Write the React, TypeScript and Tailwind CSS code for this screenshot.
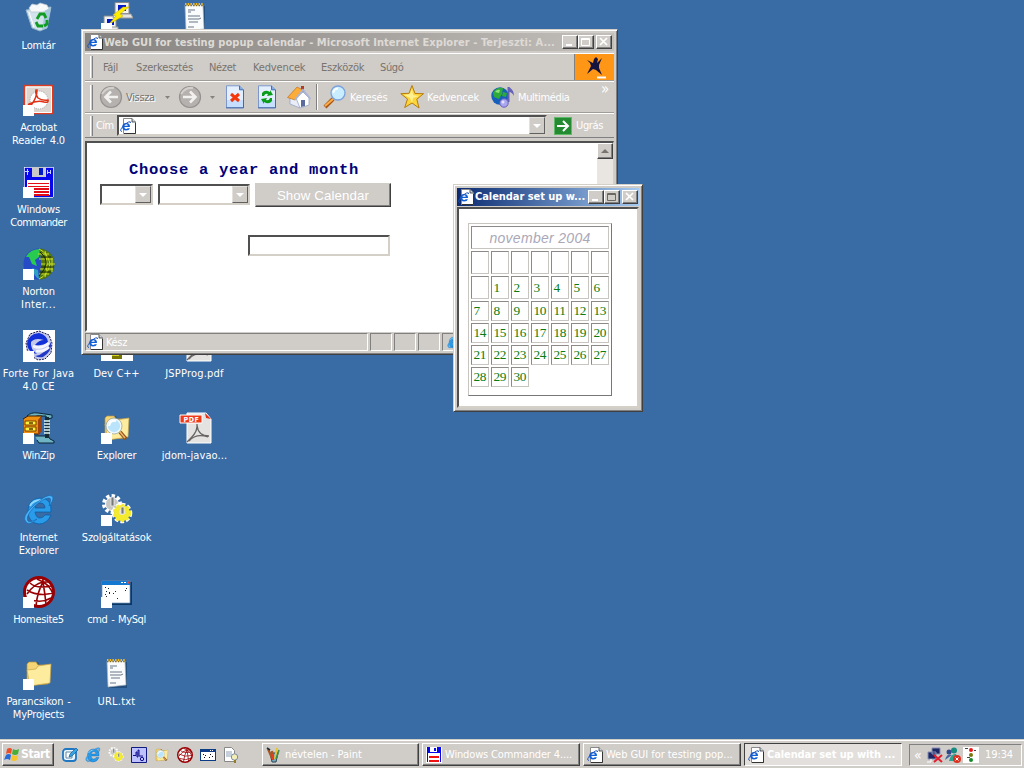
import React from "react";

type P = { className?: string };

const ui = "font-['DejaVu_Sans_Condensed','DejaVu_Sans',sans-serif] [font-stretch:condensed]";

/* ---------- icons ---------- */

const Shortcut = () => <rect x="0" y="21" width="11" height="11" fill="#fff" />;

const Recycle = ({ className = "size-8" }: P) => (
  <svg viewBox="0 0 32 32" className={className}>
    <path d="M3 8 L28 5 L24 26 L17 29 L9 26Z" fill="#d2e3ec" stroke="#8fb2c9" />
    <path d="M6 6 L9 2 L14 3 L17 1 L24 3 L26 7 L20 10 L8 10Z" fill="#f6f8fa" stroke="#b9c6cf" strokeWidth=".7" />
    <path d="M24 26 L28 5 L22 9 L19 28Z" fill="#a5c8dd" />
    <path d="M6 10 L11 25 M10 4 L15 8 L20 3" stroke="#fff" fill="none" />
    <path d="M14 17 L17 12 H21 L23 16 M20 24 H15 L13 20 M24 18 L24 22 L21 24" stroke="#119b23" strokeWidth="2.8" fill="none" />
  </svg>
);

const Network = ({ className = "size-8" }: P) => (
  <svg viewBox="0 0 32 32" className={className}>
    <path d="M14 .5h14v11H14zM3 14h12v12H3z" fill="#f2f2f2" stroke="#8a8a8a" />
    <path d="M17 3h8v6h-8zM6 17h7v6H6z" fill="#0018c8" />
    <path d="M13 12h17l2 4H12zM1 25h16v5H0z" fill="#e4e4e4" stroke="#999" />
    <path d="M22 5 L12 13 L15 14 L7 23 L22 14 L19 12 L28 5Z" fill="#ffee00" stroke="#c7a500" strokeWidth=".5" />
    <Shortcut />
  </svg>
);

const Notepad = ({ className = "size-8" }: P) => (
  <svg viewBox="0 0 32 32" className={className}>
    <path d="M7 4h19v26H8z" fill="#143c67" opacity=".6" />
    <path d="M6 3h18l1 24-18 2z" fill="#fafbfc" stroke="#a9b3bb" strokeWidth=".7" />
    <path d="M6 3h18" stroke="#85680b" strokeWidth="2.4" strokeDasharray="1.5 1.2" />
    <path d="M6 2h18" stroke="#eeb72e" strokeWidth="2" strokeDasharray="1.5 1.2" />
    <path d="M9 8h7M9 10h3M9 14h12M9 17h11l2-1M10 20h9M9 25h6" stroke="#687785" fill="none" />
  </svg>
);

const Acrobat = ({ className = "size-8" }: P) => (
  <svg viewBox="0 0 32 32" className={className}>
    <path d="M1.5 1.5h28v28h-28z" fill="#dcd5d0" stroke="#df3b21" strokeWidth="1.3" />
    <path d="M3 3h25.500v25.500H3z" fill="none" stroke="#fff" />
    <circle cx="16" cy="16" r="9" fill="#fff" stroke="#aaa" strokeDasharray="1 1" />
    <path d="M13 6 Q12 10 15 14 Q19 17 25 16 Q26 19 21 18 Q14 16 6 20 Q4 23 9 20 Q14 13 14 6Z" fill="none" stroke="#e13216" strokeWidth="1.5" />
    <Shortcut />
  </svg>
);

const Floppy = ({ className = "size-8", shortcut = true }: P & { shortcut?: boolean }) => (
  <svg viewBox="0 0 32 32" className={className} shapeRendering="crispEdges">
    <path d="M1 1h29v30H4l-3-3z" fill="#0707ed" stroke="#fff" strokeWidth=".7" />
    <path d="M9 1h14v10H9z" fill="#c9c9c9" />
    <path d="M16 2h4v7h-4z" fill="#001bc5" />
    <path d="M4 14h23v15H4z" fill="#fff" />
    <path d="M5 17h21M5 20h21" stroke="#e20b16" />
    <path d="M5 23h21M11 26h15M11 29h15" stroke="#e20b16" strokeWidth="2" />
    <path d="M2 5h4M4 3v6M24 4v4M24 6h3v-2M27 4v4" stroke="#c9d2ff" fill="none" />
    {shortcut && <Shortcut />}
  </svg>
);

const SmallFloppy = () => (
  <svg viewBox="0 0 16 16" className="size-4 shrink-0" shapeRendering="crispEdges">
    <path d="M0 0h16v16H0z" fill="#fff" />
    <path d="M1 0h14v6H1zM1 6h1v9H1zM14 6h1v9h-1z" fill="#0707ed" />
    <path d="M4 0h7v5H4z" fill="#fff" />
    <path d="M8 1h2v3H8z" fill="#0707ed" />
    <path d="M3 9h10v2H3zM3 13h10v2H3z" fill="#f01010" />
  </svg>
);

const Norton = () => (
  <svg viewBox="0 0 32 32" className="size-8">
    <circle cx="16" cy="16" r="15.5" fill="#254bc6" />
    <path d="M3 9 Q7 1 17 1 L16 9 L12 12 L14 18 L9 16 L6 9Z" fill="#29ca50" />
    <path d="M9 20l6 2 1 9q-5-2-7-11z" fill="#2f9fc0" />
    <path d="M16 .5 A15.5 15.5 0 0 1 16 31.5 Q20 16 16 .5Z" fill="#55790c" />
    <path d="M16 1 Q25 5 27 16 Q25 27 16 31 M15 6h11M16 11h14M18 16h14M17 21h13M16 26h10M22 3 Q26 16 22 29M29 8v16" fill="none" stroke="#c8dd2a" />
    <path d="M17 4 Q24 10 23 16 T16 28M18 9h12M18 19h13M17 24h11" fill="none" stroke="#182806" />
    <Shortcut />
  </svg>
);

const Forte = () => (
  <svg viewBox="0 0 32 32" className="size-8">
    <path d="M0 0h32v32H0z" fill="#fff" />
    <path d="M16 1 L26 5 29 13 28 23 22 29 15 30 5 24 3 13 7 4Z" fill="#c4c9ea" stroke="#15174a" strokeDasharray="2 1" />
    <path d="M4 14 Q5 4 16 3 Q24 5 25 12 Q20 16 12 15 Q16 10 21 10 Q12 7 8 12 Q7 19 14 24 Q5 23 4 14Z" fill="#1230d8" />
    <path d="M28 12 Q29 22 20 27 Q16 28 12 26 Q22 25 28 12" fill="#2338c4" />
    <path d="M10 16 Q18 20 26 13 M13 21 Q21 22 26 17" fill="none" stroke="#f4f5ff" strokeWidth="2.6" />
    <Shortcut />
  </svg>
);

const WinZip = () => (
  <svg viewBox="0 0 32 32" className="size-8">
    <path d="M4 4 Q8 0 15 1 L29 3V6L24 7 23 4 14 4 10 6ZM12 24h13l2 3 4 2v2H16l-2-3" fill="#6fb4c4" stroke="#092634" />
    <path d="M24 5v21" stroke="#172c32" strokeWidth="4" />
    <path d="M21 9h6m-6 3h6m-6 3h6m-6 3h6m-6 3h6" stroke="#e4f7f7" strokeWidth="1.3" />
    <path d="M0 7 L5 4h14l-3 4v14H0z" fill="#ef9011" stroke="#401d00" />
    <path d="M15 8l4-4v15l-4 4z" fill="#a1440b" />
    <path d="M2 9h11v4H2zM2 15h11v4H2z" fill="#fff13c" stroke="#784100" />
    <path d="M6 11h4m-4 6h4" stroke="#5b3b00" strokeWidth="1.5" />
    <Shortcut />
  </svg>
);

const Folder = ({ className = "size-8", shortcut = false, lens = false }: P & { shortcut?: boolean; lens?: boolean }) => (
  <svg viewBox="0 0 32 32" className={className}>
    <path d="M5 8 L8 4h7l2 3h10v18L6 28z" fill="#26496c" opacity=".55" />
    <path d="M4 6 L6 4h7l2 3h11l-1 19L4 27z" fill="#f4d475" stroke="#b7943d" strokeWidth=".7" />
    <path d="M4 12 L13 11 15 8 L28 6l-1 19L7 28z" fill="#fdeb9e" stroke="#c8a446" strokeWidth=".7" />
    {lens && (
      <>
        <path d="M19 20l6 7" stroke="#8b5418" strokeWidth="3.6" />
        <path d="M19 20l5 6" stroke="#f0b067" strokeWidth="1.6" />
        <circle cx="13" cy="14" r="7" fill="#b9e4fb" stroke="#f4f7f8" strokeWidth="1.7" />
        <circle cx="13" cy="14" r="8" fill="none" stroke="#7795a7" strokeWidth=".6" />
        <path d="M8 14 Q9 8 15 9" fill="none" stroke="#fff" strokeWidth="2" />
      </>
    )}
    {shortcut && <Shortcut />}
  </svg>
);

const Pdf = () => (
  <svg viewBox="0 0 34 32" className="h-8 w-[34px]">
    <path d="M9 1h19l5 6v24H9z" fill="#e4e3e2" stroke="#fff" />
    <path d="M27 1l6 6-5-1z" fill="#e23017" />
    <path d="M19 12 Q20 19 13 26 L9 30 M19 13 Q20 24 31 24 M11 29 Q18 21 30 25" fill="none" stroke="#686464" strokeWidth="1.3" />
    <path d="M2 3h22v8H2z" fill="#f0391a" stroke="#fff" />
    <text x="5.500" y="9.600" fontSize="7" fontWeight="bold" fontFamily="DejaVu Sans" fill="#fff" textLength="15">PDF</text>
  </svg>
);

const DevCpp = () => (
  <svg viewBox="0 0 32 32" className="size-8">
    <path d="M0 0h32v31H0z" fill="#fff" />
    <path d="M11 23h10v6H11z" fill="#777600" />
    <path d="M11 24h7v2h-7z" fill="#d5d51a" />
  </svg>
);

const IEBig = ({ className = "size-8" }: P) => (
  <svg viewBox="0 0 32 32" className={className}>
    <path d="M28 18H12Q13 24 17 24Q20 24 22 21H28Q24 30 16 30Q5 29 5 17Q5 5 17 4Q29 4 28 18ZM12 14H22Q22 9 17 9Q13 9 12 14Z" fill="#299be9" stroke="#095aa6" strokeWidth=".7" />
    <path d="M7 12 Q10 6 18 6" fill="none" stroke="#8cd8ff" strokeWidth="1.8" />
    <path d="M3 28 Q-2 23 10 12 Q24-1 29 2 Q32 5 26 12 Q29 4 26 4 Q20 4 11 13 Q2 23 5 27 Q7 29 14 25 Q6 32 3 28Z" fill="#4bb4f6" stroke="#176ab8" strokeWidth=".7" />
  </svg>
);

const IEPage = ({ className = "size-4" }: P) => (
  <svg viewBox="0 0 16 16" className={className}>
    <path d="M3.500.500h8.500l3.500 3.500v11.500h-12z" fill="#fff" stroke="#8a8a8a" />
    <path d="M12 .500v3.500h3.500" fill="#c9d2dc" stroke="#333" strokeWidth=".8" />
    <path d="M4 15.500h11.500V5" fill="none" stroke="#333" />
    <path d="M10 9H4.300Q4.600 11 6.100 11q1 0 1.600-.8H10Q9.200 12.600 6.100 12.600 2.300 12.400 2.200 8.700 2.300 5 6.100 4.900 10.200 5 10 9ZM4.300 7.700h3.500Q7.600 6.300 6.100 6.300T4.300 7.700Z" fill="#1260d8" />
    <path d="M2 13.300Q-.5 13.500 1.500 10.300 4 6 8.500 4 11 3.200 10.500 5" stroke="#1b55b8" strokeWidth="1" fill="none" />
  </svg>
);

const Gears = ({ className = "size-8", shortcut = true }: P & { shortcut?: boolean }) => (
  <svg viewBox="0 0 32 32" className={className}>
    <circle cx="11" cy="10" r="8" fill="none" stroke="#fff" strokeWidth="4" strokeDasharray="3.2 2.1" />
    <circle cx="11" cy="10" r="6.500" fill="#c6c6c3" stroke="#fff" />
    <circle cx="21" cy="19" r="8" fill="none" stroke="#fff" strokeWidth="4.600" strokeDasharray="3.400 1.900" />
    <circle cx="21" cy="19" r="8" fill="#f4ea2e" stroke="#f4ea2e" strokeWidth="2.400" strokeDasharray="2.600 2.700" />
    <circle cx="21" cy="18" r="3" fill="#e6e2d6" />
    <path d="M10 3h3v9h-3zM20 13h3v7h-3z" fill="#787a7a" stroke="#eee" strokeWidth=".8" />
    {shortcut && <Shortcut />}
  </svg>
);

const Homesite = ({ className = "size-8", shortcut = true }: P & { shortcut?: boolean }) => (
  <svg viewBox="0 0 32 32" className={className}>
    <circle cx="16" cy="16" r="14.500" fill="#fff" stroke="#980004" strokeWidth="3" />
    <path d="M20 6Q11 8 4 18M20 6Q14 17 13 30M20 6Q22 18 23 28M20 6Q27 10 30 18M7 7Q13 13 28 10M4 14Q15 21 30 17M6 23Q18 28 28 22M20 2v4M14 3l6 3 8 0" fill="none" stroke="#980004" strokeWidth="1.600" />
    {shortcut && <Shortcut />}
  </svg>
);

const Cmd = () => (
  <svg viewBox="0 0 32 32" className="size-8">
    <path d="M3 6h28v23H3z" fill="#0c3765" />
    <path d="M1 5h28v22H1z" fill="#fff" stroke="#6f93ba" strokeWidth=".7" />
    <path d="M1 5h28v4H1z" fill="#1477d0" />
    <path d="M20 6.500h2m1 0h2" stroke="#fff" />
    <path d="M26 6.500h2" stroke="#e43" strokeWidth="2" />
    <path d="M4 11.500h1m2 1h1m-3 3h1m2 1h1m5-1h1m10-3h1m-2 2h1M4 18.500h1m3-1h1m3 0h1m-8 3h1m10 2h1" stroke="#17272f" fill="none" />
    <Shortcut />
  </svg>
);

const SmallCmd = () => (
  <svg viewBox="0 0 16 16" className="size-4" shapeRendering="crispEdges">
    <path d="M0 2h16v12H0z" fill="#0c3c86" />
    <path d="M1 5h14v8H1z" fill="#fff" />
    <path d="M10 3h1v1h-1zM12 3h1v1h-1z" fill="#fff" />
    <path d="M3 7h1v1H3zM5 8h1v1H5zM4 10h1v1H4zM10 7h1v1h-1zM12 9h1v1h-1zM9 10h1v1H9z" fill="#111" />
  </svg>
);

const StopPage = ({ refresh = false }: { refresh?: boolean }) => (
  <svg viewBox="0 0 20 24" className="h-6 w-5 shrink-0">
    <path d="M1.500.800h13l4 4v18h-17z" fill="#e3efff" stroke="#7d97cc" />
    <path d="M2 15h16v7H2z" fill="#afd0ff" opacity=".55" />
    <path d="M14.500.800v4h4" fill="#88acdf" stroke="#416eb6" />
    <path d="M1 22.800h17.500V5" fill="none" stroke="#4468ad" />
    {refresh ? (
      <>
        <path d="M5 11V8q3-4 8-1V5l3 5-6 1 1-2q-3-1-4 2Z" fill="#0a9b19" />
        <path d="M15 13v3q-3 4-8 1v2l-3-5 6-1-1 2q3 1 4-2Z" fill="#0a9b19" />
      </>
    ) : (
      <path d="M6 9l8 7M14 9l-8 7" stroke="#f4370b" strokeWidth="3" />
    )}
  </svg>
);

const HomeIcon = () => (
  <svg viewBox="0 0 24 24" className="size-6 shrink-0">
    <path d="M3 12v7l10 4V11L8 8z" fill="#e9edf8" stroke="#8f9cc0" strokeWidth=".7" />
    <path d="M9 13l7-6 6 6v7l-9 3z" fill="#fff" stroke="#8f9cc0" strokeWidth=".7" />
    <path d="M14 1h3v6h-3z" fill="#b03a24" />
    <path d="M.5 12.500L10 2l6 3-8 10z" fill="#fbac39" stroke="#c1701f" strokeWidth=".7" />
    <path d="M8 15l8-10 7.500 9" fill="none" stroke="#a9b6da" strokeWidth="1.800" />
    <path d="M14 15h4v6l-4 1z" fill="#5a6ba0" />
  </svg>
);

const SearchIcon = () => (
  <svg viewBox="0 0 24 24" className="size-6 shrink-0">
    <path d="M10 14L2 22" stroke="#a95512" strokeWidth="4" />
    <path d="M10 14L2 21" stroke="#f9ae48" strokeWidth="2" />
    <circle cx="15" cy="8" r="7" fill="#c7edff" stroke="#7ba2dc" strokeWidth="1.300" />
    <path d="M10.500 8Q10 4 15 3.500" stroke="#fff" fill="none" strokeWidth="2" />
  </svg>
);

const Star = () => (
  <svg viewBox="0 0 24 24" className="size-6 shrink-0">
    <path d="M12 .500l3 8 8.500.200-6.700 5.500L19 23l-7-5-7.300 4.500L7.500 14 .800 8.700 9 8.300z" fill="#fcd53c" stroke="#b57b0c" />
    <path d="M12 4l1 6 6 1-6 2-1 5-2-5-6-3 6-1z" fill="#fff7a6" opacity=".8" />
  </svg>
);

const Media = () => (
  <svg viewBox="0 0 24 24" className="size-6 shrink-0">
    <circle cx="9" cy="11" r="8.700" fill="#165fba" />
    <path d="M2 8Q5 2 12 3l-1 6-3 5-5-2zM12 7l4 1-1 4-4-1z" fill="#2eaa38" />
    <path d="M4 7q2-3 5-2l-1 3z" fill="#8fe27c" />
    <path d="M17.500 2v15" stroke="#6461b9" strokeWidth="2" />
    <path d="M18 2q5 3 5 9-2-4-5-4z" fill="#6461b9" />
    <circle cx="13" cy="18" r="4.200" fill="#aaa7f1" stroke="#6561b8" />
    <circle cx="12" cy="17" r="1.500" fill="#e5e4ff" />
  </svg>
);

const ArrowBall = ({ right = false }: { right?: boolean }) => (
  <svg viewBox="0 0 24 24" className="size-6 shrink-0">
    <circle cx="12" cy="12" r="10.500" fill="#b4b1ae" stroke="#94918e" strokeWidth="1.200" />
    <path d="M3 9Q7 2 15 3" stroke="#d2cfcc" fill="none" strokeWidth="2" />
    <path d={right ? "M5 12h12M12 6.500l5.500 5.500-5.500 5.500" : "M19 12H7M12 6.500l-5.500 5.500 5.500 5.500"} stroke="#f3f1ef" strokeWidth="2.600" fill="none" />
  </svg>
);

const ThrobberFigure = () => (
  <svg viewBox="0 0 38 27" className="h-[27px] w-[38px]">
    <path d="M11 6l6 3 1-4 2-2 2 2-1 4 5-5-3 7 0 3 3 7-6-5-3-1-6 5 4-8-1-3z" fill="#14123f" />
    <path d="M21 23.500h9" stroke="#fff" strokeWidth="2" />
  </svg>
);

const WinFlag = () => (
  <svg viewBox="0 0 16 16" className="size-4 shrink-0">
    <path d="M3 2q3-2 5 0L7 7Q5 5 2 7z" fill="#ee4e27" />
    <path d="M9 2q3 2 6 0l-1 5q-3 2-6 0z" fill="#48ae35" />
    <path d="M2 8q3-2 5 0l-1 5q-3-2-6 0z" fill="#286bd6" />
    <path d="M8 8q3 2 6 0l-1 5q-3 2-6 0z" fill="#f7c42c" />
  </svg>
);

const ShowDesktop = () => (
  <svg viewBox="0 0 16 16" className="size-4">
    <rect x="1" y="2" width="13" height="12" rx="3" fill="#e9f5ff" stroke="#2077c2" strokeWidth="1.800" />
    <path d="M4 5h6v6H4z" fill="#fff" stroke="#6488a1" />
    <path d="M7 10l1-3 6-6 2 2-6 6z" fill="#36a3e3" stroke="#175c99" strokeWidth=".7" />
  </svg>
);

const Wave = () => (
  <svg viewBox="0 0 16 16" className="size-4">
    <path d="M.5.5h15v15H.5z" fill="#bec1ff" stroke="#111a83" />
    <path d="M2 8.500h3V5h1v5h1V3h1v6h4" stroke="#10108a" fill="none" />
    <circle cx="11" cy="12" r="1.700" fill="none" stroke="#10108a" />
  </svg>
);

const PageLens = () => (
  <svg viewBox="0 0 16 16" className="size-4">
    <path d="M1.500.500h7l3 3v11h-10z" fill="#fff" stroke="#888" />
    <path d="M3 5h6M3 7h6M3 9h5" stroke="#8ba1b8" />
    <circle cx="11.500" cy="10" r="3.200" fill="#f1efb4" stroke="#7c8baa" />
    <path d="M12 13v3" stroke="#937d28" strokeWidth="2" />
  </svg>
);

const Paint = () => (
  <svg viewBox="0 0 16 16" className="size-4 shrink-0">
    <path d="M4 6h8l-2 9H6z" fill="#79a8ba" stroke="#27495a" />
    <path d="M6 11L2 2M7 12L6 4" stroke="#a95622" strokeWidth="2.200" />
    <path d="M9 12l2-11" stroke="#edc332" strokeWidth="2" />
    <path d="M10 12l3-9" stroke="#3d8c55" strokeWidth="1.600" />
    <path d="M7 7v6" stroke="#e43d25" strokeWidth="2" />
    <path d="M1 1l3 2" stroke="#252d37" strokeWidth="1.600" />
  </svg>
);

/* ---------- window parts ---------- */

const raised = "border border-t-white border-l-white border-r-[#404040] border-b-[#404040] bg-[#d0ccc8] shadow-[inset_-1px_-1px_0_#808080]";
const sunken = "border border-t-[#808080] border-l-[#808080] border-r-white border-b-white";
const shell = "absolute flex flex-col border border-[#d4d0c8] border-r-[#404040] border-b-[#404040] bg-[#d0ccc8] p-[3px] shadow-[inset_1px_1px_0_#fff,inset_-1px_-1px_0_#808080]";

const Caption = ({ kind, dim = false }: { kind: "min" | "max" | "close"; dim?: boolean }) => (
  <span className={`flex h-[14px] w-4 shrink-0 items-center justify-center ${raised}`}>
    <svg viewBox="0 0 12 10" className="h-[10px] w-3" fill="none" stroke={dim ? "#6b6863" : "#fff"}>
      {kind === "min" && <path d="M2 8h6" stroke="#fff" strokeWidth="2" />}
      {kind === "max" && <path d="M1.500 1.500h8v7h-8zM1.500 2.500h8" />}
      {kind === "close" && <path d="M2 1l7 7M9 1l-7 7" stroke="#fff" strokeWidth="1.700" />}
    </svg>
  </span>
);

const Down = ({ className = "" }: P) => (
  <span className={`flex items-center justify-center border border-t-[#e4e1dc] border-l-[#e4e1dc] border-r-[#606060] border-b-[#606060] bg-[#d0ccc8] ${className}`}>
    <svg viewBox="0 0 8 4" className="h-1 w-2"><path d="M0 0h8L4 4z" fill="#fff" /></svg>
  </span>
);

const Grip = ({ className = "h-5" }: P) => (
  <span className={`w-[3px] shrink-0 border-r border-l border-r-[#808080] border-l-white ${className}`} />
);

const SmallDown = () => (
  <svg viewBox="0 0 5 3" className="h-[3px] w-[5px] shrink-0"><path d="M0 0h5L2.500 3z" fill="#85817c" /></svg>
);

const fields = "border-2 border-t-[#505050] border-l-[#505050] border-r-[#d4d0c8] border-b-[#d4d0c8] bg-white";

/* ---------- desktop ---------- */

type Line = [text: string, tracking?: string];
type Item = { col: string; row: string; icon: React.ReactNode; label?: Line[] };

const items: Item[] = [
  { col: "col-start-1", row: "row-start-1", icon: <Recycle />, label: [["Lomtár"]] },
  { col: "col-start-1", row: "row-start-2", icon: <Acrobat />, label: [["Acrobat"], ["Reader 4.0"]] },
  { col: "col-start-1", row: "row-start-3", icon: <Floppy />, label: [["Windows"], ["Commander", "tracking-[-0.5px]"]] },
  { col: "col-start-1", row: "row-start-4", icon: <Norton />, label: [["Norton"], ["Inter...", "tracking-[0.4px]"]] },
  { col: "col-start-1", row: "row-start-5", icon: <Forte />, label: [["Forte For Java", "tracking-[0.1px]"], ["4.0 CE"]] },
  { col: "col-start-1", row: "row-start-6", icon: <WinZip />, label: [["WinZip", "tracking-[-0.35px]"]] },
  { col: "col-start-1", row: "row-start-7", icon: <IEBig />, label: [["Internet"], ["Explorer"]] },
  { col: "col-start-1", row: "row-start-8", icon: <Homesite />, label: [["Homesite5", "tracking-[-0.3px]"]] },
  { col: "col-start-1", row: "row-start-9", icon: <Folder shortcut />, label: [["Parancsikon -"], ["MyProjects"]] },
  { col: "col-start-2", row: "row-start-1", icon: <Network /> },
  { col: "col-start-2", row: "row-start-5", icon: <DevCpp />, label: [["Dev C++"]] },
  { col: "col-start-2", row: "row-start-6", icon: <Folder shortcut lens />, label: [["Explorer"]] },
  { col: "col-start-2", row: "row-start-7", icon: <Gears />, label: [["Szolgáltatások"]] },
  { col: "col-start-2", row: "row-start-8", icon: <Cmd />, label: [["cmd - MySql", "tracking-[-0.4px]"]] },
  { col: "col-start-2", row: "row-start-9", icon: <Notepad />, label: [["URL.txt", "tracking-[0.2px]"]] },
  { col: "col-start-3", row: "row-start-1", icon: <Notepad /> },
  { col: "col-start-3", row: "row-start-5", icon: <Pdf />, label: [["JSPProg.pdf", "tracking-[0.2px]"]] },
  { col: "col-start-3", row: "row-start-6", icon: <Pdf />, label: [["jdom-javao...", "tracking-[0.1px]"]] },
];

const Browser = () => (
  <section className={`${shell} top-[29px] left-[81px] h-[326px] w-[537px]`}>
    <header className="flex h-[18px] shrink-0 items-center bg-linear-to-r from-[#85827f] to-[#c2bfbb] pr-[2px] pl-[2px]">
      <IEPage className="size-4 shrink-0" />
      <h1 className="ml-[1px] w-[458px] overflow-hidden text-[11px] font-bold tracking-[0.04px] whitespace-nowrap text-[#dedad5]">
        Web GUI for testing popup calendar - Microsoft Internet Explorer - Terjeszti: A...
      </h1>
      <div className="ml-auto flex"><Caption kind="min" /><Caption kind="max" /><span className="w-[2px]" /><Caption kind="close" /></div>
    </header>

    <nav className="mt-[2px] flex h-[28px] shrink-0 items-center border-t border-b border-t-white border-b-[#a09c98] pl-[5px] text-[#77736e]">
      <Grip className="h-[22px]" />
      <span className="ml-[10px] w-[33px]">Fájl</span>
      <span className="w-[73px] tracking-[-0.15px]">Szerkesztés</span>
      <span className="w-[44px]">Nézet</span>
      <span className="w-[68px] tracking-[-0.15px]">Kedvencek</span>
      <span className="w-[59px] tracking-[-0.2px]">Eszközök</span>
      <span>Súgó</span>
      <span className="ml-auto flex h-[26px] items-center border-l border-[#808080] bg-[#ff9615] pl-px"><ThrobberFigure /></span>
    </nav>

    <div className="flex h-[32px] shrink-0 items-center border-t border-b border-t-white border-b-[#a09c98] pl-[5px] text-white">
      <Grip className="h-[25px]" />
      <span className="ml-[6px] flex w-[79px] items-center">
        <ArrowBall />
        <span className="ml-[3px] w-[39px] text-[#77736e] [text-shadow:1px_1px_0_#fff]">Vissza</span>
        <SmallDown />
      </span>
      <span className="flex w-[47px] items-center gap-2"><ArrowBall right /><SmallDown /></span>
      <span className="w-8"><StopPage /></span>
      <span className="w-[30px]"><StopPage refresh /></span>
      <HomeIcon />
      <span className="mx-[5px] h-[26px] w-[2px] border-r border-l border-r-white border-l-[#808080]" />
      <span className="flex w-[77px] items-center gap-[3px] tracking-[-0.1px]"><SearchIcon />Keresés</span>
      <span className="flex w-[91px] items-center gap-[3px] tracking-[-0.2px]"><Star />Kedvencek</span>
      <span className="flex items-center gap-[3px]"><Media />Multimédia</span>
      <span className="mr-[5px] ml-auto self-start text-[15px] leading-[15px]">»</span>
    </div>

    <div className="flex h-[25px] shrink-0 items-center border-t border-b border-t-white border-b-[#808080] pl-[5px] text-white">
      <Grip />
      <span className="ml-[3px] w-[21px] tracking-[-0.6px]">Cím</span>
      <div className={`flex h-[21px] w-[430px] items-center justify-between pl-px ${fields}`}>
        <IEPage /><Down className="h-[17px] w-4" />
      </div>
      <span className="ml-[7px] flex size-[18px] items-center justify-center bg-[#258b32] shadow-[inset_0_0_0_1px_#5fb968]">
        <svg viewBox="0 0 14 14" className="size-[14px]"><path d="M1 7h10M7 2l5 5-5 5" fill="none" stroke="#fff" strokeWidth="2" /></svg>
      </span>
      <span className="ml-[4px]">Ugrás</span>
    </div>

    <main className="mt-[3px] flex h-[191px] shrink-0 border-t-2 border-r border-b-2 border-l-2 border-t-[#505050] border-l-[#505050] border-r-[#d4d0c8] border-b-white bg-white">
      <div className="flex-1">
        <h2 className="mt-[18px] ml-[42px] h-[23px] font-['Liberation_Mono',monospace] text-[15.500px] leading-[18px] font-bold tracking-[0.7px] whitespace-pre text-[#000078]">Choose a year and month</h2>
        <div className="ml-[13px] flex items-start">
          <div className={`flex h-[21px] w-[53px] justify-end ${fields}`}><Down className="h-[17px] w-4" /></div>
          <div className={`ml-[5px] flex h-[21px] w-[92px] justify-end ${fields}`}><Down className="h-[17px] w-4" /></div>
          <button className="-mt-px ml-[5px] h-6 w-[136px] border border-[#d0ccc8] border-r-[#404040] border-b-[#404040] bg-[#d0ccc8] font-['Liberation_Sans',sans-serif] text-[13.300px] tracking-[0.1px] text-white shadow-[inset_-1px_-1px_0_#808080]">Show Calendar</button>
        </div>
        <div className={`mt-[28px] ml-[161px] h-[21px] w-[142px] ${fields}`} />
      </div>
      <aside className="w-4 bg-[#e9e6e2]">
        <span className={`flex h-4 items-center justify-center ${raised}`}>
          <svg viewBox="0 0 8 4" className="h-1 w-2"><path d="M0 4h8L4 0z" fill="#77736e" /></svg>
        </span>
      </aside>
    </main>

    <footer className="mt-px flex h-[18px] shrink-0 gap-[2px] text-white">
      <div className={`flex w-[283px] items-center gap-[3px] pl-px ${sunken}`}><IEPage />Kész</div>
      {[0, 1, 2].map((n) => <div key={n} className={`w-[22px] ${sunken}`} />)}
      <div className={`flex flex-1 items-center pl-1 ${sunken}`}><IEBig className="size-[14px]" /></div>
    </footer>
  </section>
);

const weeks = [
  ["", "", "", "", "", "", ""],
  ["", "1", "2", "3", "4", "5", "6"],
  ["7", "8", "9", "10", "11", "12", "13"],
  ["14", "15", "16", "17", "18", "19", "20"],
  ["21", "22", "23", "24", "25", "26", "27"],
  ["28", "29", "30"],
];

const cell = "border border-t-[#8c8986] border-l-[#8c8986] border-r-[#c8c4c0] border-b-[#c8c4c0]";

const Calendar = () => (
  <section className={`${shell} top-[184px] left-[453px] h-[228px] w-[190px]`}>
    <header className="flex h-[18px] shrink-0 items-center bg-linear-to-r from-[#0c2a70] to-[#a6caf0] pr-px pl-px">
      <IEPage className="size-4 shrink-0" />
      <h1 className="ml-[1px] text-[11px] leading-[14px] font-bold tracking-[-0.05px] whitespace-nowrap text-white">Calendar set up w...</h1>
      <div className="ml-auto flex"><Caption kind="min" /><Caption kind="max" dim /><span className="w-[2px]" /><Caption kind="close" /></div>
    </header>
    <div className="mt-px flex-1 border-2 border-t-[#505050] border-l-[#505050] border-r-[#d4d0c8] border-b-[#d4d0c8] bg-white pt-[14px] pl-[9px]">
      <div className="h-[173px] w-[144px] border border-t-[#c8c4c0] border-l-[#c8c4c0] border-r-[#777] border-b-[#777] p-[2px]">
        <div className="grid grid-cols-[repeat(7,18px)] grid-rows-[23px_23px_23px_20px_20px_20px_20px] gap-[2px] font-['Liberation_Serif',serif] text-[13.300px] leading-none text-[#087b12]">
          <div className={`col-span-7 flex items-center justify-center font-['Liberation_Sans',sans-serif] text-[14px] tracking-[0.3px] text-[#aaa8b8] italic ${cell}`}>november 2004</div>
          {weeks.flatMap((week, r) =>
            week.map((day, c) => (
              <div key={`${r}-${c}`} className={`flex items-center pl-[1.500px] ${cell}`}>{day}</div>
            )),
          )}
        </div>
      </div>
    </div>
  </section>
);

const Task = ({ icon, label, className }: { icon: React.ReactNode; label: string; className: string }) => (
  <div className={`flex h-[23px] shrink-0 items-center gap-[3px] overflow-hidden pl-[3px] whitespace-nowrap ${className}`}>{icon}<span>{label}</span></div>
);

const Taskbar = () => (
  <footer className="flex h-[29px] items-center border-t border-[#d4d0c8] bg-[#d0ccc8] pt-[2px] pb-px text-white shadow-[inset_0_1px_0_#fff]">
    <div className={`ml-[2px] flex h-[23px] w-[52px] items-center gap-[1px] pl-px text-[12px] font-bold tracking-[-0.4px] ${raised}`}><WinFlag />Start</div>
    <div className="ml-2 flex w-[200px] items-center gap-[7px]">
      <ShowDesktop /><IEBig className="size-4" /><Gears className="size-4" shortcut={false} /><Wave /><Folder className="size-4" lens /><Homesite className="size-4" shortcut={false} /><SmallCmd /><PageLens />
    </div>
    <div className="flex gap-[3px]">
      <Task icon={<Paint />} label="névtelen - Paint" className={`w-[157px] tracking-[-0.05px] ${raised}`} />
      <Task icon={<SmallFloppy />} label="Windows Commander 4...." className={`w-[158px] tracking-[-0.15px] ${raised}`} />
      <Task icon={<IEPage className="size-4 shrink-0" />} label="Web GUI for testing pop..." className={`w-[158px] tracking-[-0.05px] ${raised}`} />
      <Task icon={<IEPage className="size-4 shrink-0" />} label="Calendar set up with ..." className="w-[158px] border border-t-[#404040] border-l-[#404040] border-r-white border-b-white bg-[#e2dfdc] font-bold tracking-[-0.1px]" />
    </div>
    <div className={`mr-[2px] ml-auto flex h-[22px] w-[113px] items-center pl-[4px] ${sunken}`}>
      <span className="w-[13px] text-[14px] leading-none">«</span>
      <svg viewBox="0 0 52 16" className="h-4 w-[52px]">
        <path d="M5 1h8v6H5zM1 5h8v7H1z" fill="#1d2864" stroke="#8890b4" />
        <path d="M4 12v3H0" stroke="#fff" fill="none" />
        <path d="M7 8l8 7M15 8l-8 7" stroke="#e4202e" strokeWidth="2" />
        <circle cx="27" cy="3.500" r="3" fill="#168c80" /><path d="M22 14q2-8 7-7l3 7z" fill="#2aa391" />
        <circle cx="22" cy="5" r="2.500" fill="#31498b" /><path d="M18 13q2-7 7-5" fill="#49669d" />
        <circle cx="30" cy="12" r="4" fill="#dd3121" /><path d="M28.500 10.500l3 3m0-3l-3 3" stroke="#fff" />
        <path d="M36 0h16v16H36z" fill="#fff" />
        <circle cx="44" cy="3" r="2" fill="#ee1717" /><circle cx="44" cy="8" r="2" fill="#7a7510" /><circle cx="44" cy="13" r="2" fill="#158827" />
        <path d="M38 1.500h3m-1 9h3m4-7h2" stroke="#444" />
      </svg>
      <time className="ml-[6px] tracking-[-0.1px]">19:34</time>
    </div>
  </footer>
);

export default function App() {
  return (
    <div className={`relative flex h-[768px] w-[1024px] flex-col overflow-hidden bg-[#396ba4] text-[11px] leading-[13px] tracking-[-0.35px] select-none ${ui}`}>
      <div className="grid h-[739px] grid-cols-[repeat(3,78px)] grid-rows-[repeat(9,82px)] content-start">
        {items.map((item) => (
          <div key={`${item.col}${item.row}`} className={`flex flex-col items-center pt-[2px] text-center whitespace-nowrap text-white ${item.col} ${item.row}`}>
            {item.icon}
            <div className="mt-[5px] pr-px [word-spacing:1px]">
              {item.label?.map(([text, tracking = "tracking-[-0.2px]"]) => <div key={text} className={tracking}>{text}</div>)}
            </div>
          </div>
        ))}
      </div>
      <Browser />
      <Calendar />
      <Taskbar />
    </div>
  );
}
